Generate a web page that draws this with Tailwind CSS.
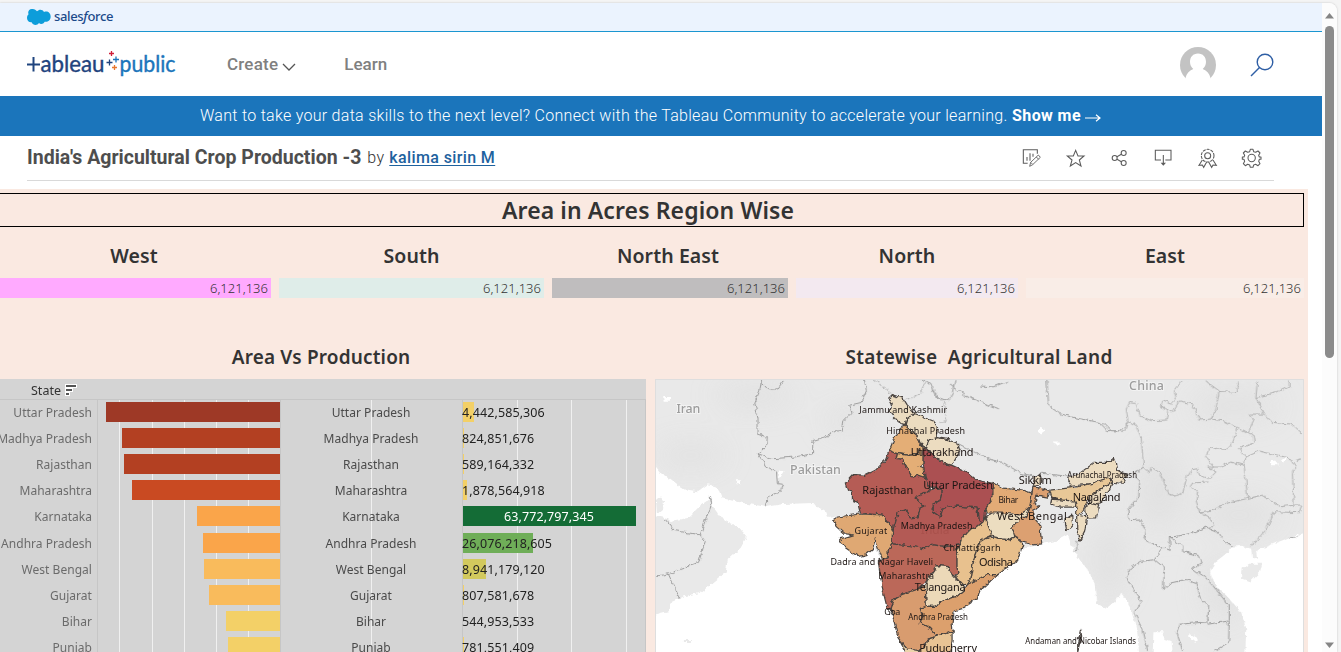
<!DOCTYPE html>
<html lang="en">
<head>
<meta charset="utf-8">
<title>India's Agricultural Crop Production -3 | Tableau Public</title>
<script src="https://cdn.jsdelivr.net/npm/@tailwindcss/browser@4"></script>
</head>
<body class="flex h-[652px] w-[1341px] overflow-hidden bg-[#f4f4f4] pt-[3px] font-['Roboto',sans-serif]">
<div class="flex h-[649px] w-[1337px] overflow-hidden rounded-tr-lg bg-[#fcfcfc] shadow-[0_0_2px_#bbb]">
<div class="h-full w-[1322px] shrink-0 overflow-hidden bg-white">

  <!-- Salesforce strip -->
  <div class="flex h-[29px] items-center border-b border-[#1b96d0] bg-[#ebf3fe] pl-[27px]">
    <svg class="h-4 w-6 shrink-0" viewBox="81 26 72 48"><path fill="#0d9dda" d="M111 33c7-8 17-6 21 2 11-4 20 3 20 14 0 10-9 17-18 15-4 8-13 8-17 4-5 8-18 8-22-2-9 1-14-6-14-13 0-5 2-9 5-11-5-10 4-17 12-16 6 0 10 3 13 7z"/></svg>
    <span class="ml-[3px] font-['Noto_Sans',sans-serif] text-[13px] font-medium tracking-[-0.34px] text-[#1b4a8a]">sales<i>f</i>orce</span>
  </div>

  <!-- Main navigation -->
  <div class="flex h-16 items-center pl-[26px] pr-[48px] pt-px">
    <svg class="h-8 w-[152px]" viewBox="26 48 152 32" font-family="Lato, sans-serif">
      <path d="M27 63.500h13M33.500 56v14.500" stroke="#1f447e" stroke-width="2" fill="none"/>
      <text x="40.500" y="71" font-size="22.500" textLength="64" lengthAdjust="spacingAndGlyphs" fill="#1f447e" stroke="#1f447e" stroke-width=".4">ableau</text>
      <text x="119.500" y="71" font-size="22.500" textLength="56" lengthAdjust="spacingAndGlyphs" fill="#1b75bb" stroke="#1b75bb" stroke-width=".4">public</text>
      <g fill="none" stroke-width="1.300"><path stroke="#d0203a" d="M109 52.500h5M111.500 50v5"/><path stroke="#1f447e" d="M106.500 61.500h6M109.500 58.500v6"/><path stroke="#1b75bb" d="M113 58.500h6M116 55.500v6"/><path stroke="#e8762c" d="M112 66.500h5M114.500 64v5"/></g>
    </svg>
    <span class="ml-[49px] text-[17px] font-medium tracking-[0.2px] text-[#808080]">Create</span>
    <svg class="ml-[4px] mt-1 h-2 w-[14px]" viewBox="0 0 14 8" fill="none" stroke="#555" stroke-width="1.300"><path d="M1 1l6 6 6-6"/></svg>
    <span class="ml-[48px] text-[17px] font-medium tracking-[0.05px] text-[#808080]">Learn</span>
    <svg class="ml-auto h-9 w-9" viewBox="0 0 36 36"><defs><clipPath id="av"><path d="M0 0h36v32H0z"/></clipPath></defs><circle cx="18" cy="18" r="18" fill="#c3c3c3" clip-path="url(#av)"/><path fill="#fff" d="M18 6.500c-5 0-8 3.500-8 8.500 0 3 1.300 5.300 3.300 7C9 23.500 6.500 27 5.500 31v5h25v-5c-1-4-3.500-7.500-7.800-9 2-1.700 3.300-4 3.300-7 0-5-3-8.500-8-8.500z"/></svg>
    <svg class="ml-[34px] h-6 w-6" viewBox="0 0 24 24" fill="none" stroke="#2f5fa5" stroke-width="1.400"><circle cx="15" cy="9" r="7.800"/><path d="M9.500 14.500L1 23"/></svg>
  </div>

  <!-- Announcement -->
  <div class="flex h-10 items-center whitespace-pre bg-[#1b75bb] pl-[200px] text-base text-white"><span class="w-[807px] font-light tracking-[0.285px]">Want to take your data skills to the next level? Connect with the Tableau Community to accelerate your learning.</span><span class="ml-[5px] font-bold tracking-[0.41px]">Show me</span><svg class="ml-[4px] mt-1 h-2 w-4" viewBox="0 0 16 8" fill="none" stroke="#fff" stroke-width="1.200"><path d="M0 4h15M11 .8L15 4l-4 3.200"/></svg></div>

  <!-- Title row -->
  <div class="ml-[27px] flex h-[45px] w-[1247px] items-center border-b border-[#d9d9d9] pb-px">
    <h1 class="text-[19.500px] font-bold tracking-[0.01px] text-[#4e4e4e]">India's Agricultural Crop Production -3</h1>
    <span class="ml-1.5 text-base font-light tracking-[0.27px] text-[#333]">by</span>
    <a class="ml-[5px] text-base font-medium tracking-[0.38px] text-[#1e629e] underline underline-offset-2">kalima sirin M</a>
    <svg class="ml-auto mr-[9px] h-6 w-[244px]" viewBox="124 438 732 72" fill="none" stroke="#5c5c5c" stroke-width="3.200">
      <path d="M144 490h-13v-41h42v12M142 482v-11M151 482v-22M160 470v-9"/><path d="M150 499l3-12 23-22 6 7-23 22zM170 471l7 7M153 487l6 6" stroke-width="2.600"/>
      <path stroke-linejoin="miter" d="M288 451l7 17h18l-14 12 5 18-16-10-16 10 5-18-14-12h18z"/>
      <circle cx="405" cy="474" r="7.500"/><circle cx="432" cy="459" r="7.500"/><circle cx="432" cy="489" r="7.500"/><path d="M412 470l13-7M412 478l13 7"/>
      <path d="M544 480h-17v-29h47v29h-17M551 465v26"/><path fill="#5c5c5c" stroke="none" d="M543 488h16l-8 9z"/>
      <circle cx="684" cy="467" r="9"/><circle cx="684" cy="467" r="19" stroke-dasharray="9 3"/><path d="M668 480l-10 16 10-1 4 7 9-16M700 480l10 16-10-1-4 7-9-16"/>
      <circle cx="816" cy="474" r="11"/><path stroke-linejoin="round" d="M812 448h8l2 7 6 2 7-4 6 6-4 7 2 5h5v7h-5l-2 6 4 7-6 6-7-4-6 2-2 7h-8l-2-7-6-2-7 4-6-6 4-7-2-6h-5v-7h5l2-5-4-7 6-6 7 4 6-2z"/>
    </svg>
  </div>

  <!-- Dashboard -->
  <div class="mt-2 h-[463px] w-[1308px] overflow-hidden bg-[#fae9e1] pt-1 font-['Noto_Sans',sans-serif] text-[#333]">
    <h2 class="-ml-px flex h-[34px] w-[1305px] items-center justify-center border border-black pr-[7px] text-[23px] font-semibold tracking-[0.1px]">Area in Acres Region Wise</h2>
    <div class="flex h-[71px] gap-2 pt-[15px] text-[19.500px] font-semibold leading-7 tracking-[0.1px] [&_p]:mt-2 [&_p]:flex [&_p]:h-5 [&_p]:items-center [&_p]:justify-end [&_p]:pr-[3px] [&_p]:text-[13px] [&_p]:font-light [&_p]:tracking-[0.02px]">
      <div class="w-[271px] text-center"><span class="-ml-[3px]">West</span><p class="bg-[#ffaaff]">6,121,136</p></div>
      <div class="w-[265px] text-center">South<p class="bg-[#dfede9]">6,121,136</p></div>
      <div class="w-[236px] text-center"><span class="-ml-[4px]">North East</span><p class="bg-[#bfbdbe]">6,121,136</p></div>
      <div class="w-[222px] text-center">North<p class="bg-[#f3e9f0]">6,121,136</p></div>
      <div class="w-[278px] text-center">East<p class="bg-[#f9ede7]">6,121,136</p></div>
    </div>
    <div class="mt-[45px] flex h-[36px] whitespace-pre text-[19px] font-semibold leading-7"><span class="w-[642px] pl-1 text-center tracking-[0.16px]">Area Vs Production</span><span class="w-[674px] pl-3 text-center tracking-[0.28px]">Statewise  Agricultural Land</span></div>

    <div class="flex gap-[9px]">
      <!-- Area and production table -->
      <div class="relative h-[273px] w-[646px] overflow-hidden bg-[#d4d4d4] text-[12px]">
        <svg class="absolute left-0 top-0 h-[273px] w-[646px]" viewBox="0 379 646 273" fill="none"><path stroke="#f0f0f0" d="M119.500 400v252M152.500 400v252M184.500 400v252M216.500 400v252M248.500 400v252M371.500 400v252M517.500 400v252M571.500 400v252M626.500 400v252"/><path stroke="#c6c6c6" d="M0 399.500h646M97.500 400v252M280.500 400v252M462.500 400v252M645.500 400v252"/></svg>
        <div class="relative flex h-5 items-center gap-1 pl-[31px] pt-[5px] text-[12.500px]">State<svg class="-mt-1 h-3 w-3" viewBox="0 0 12 12"><path stroke="#fff" stroke-width="4" d="M0 2h12M0 6h8M0 10h5"/><path stroke="#555" stroke-width="2" d="M1 2h10M1 6h6M1 10h3"/></svg></div>
        <div id="rows" class="relative"></div>
      </div>

      <!-- Map -->
      <svg class="h-[274px] w-[649px] border border-[#dedede] bg-white" viewBox="655 379 649 274" preserveAspectRatio="none">
        <defs>
          <filter id="rough" filterUnits="userSpaceOnUse" x="655" y="370" width="650" height="290" color-interpolation-filters="sRGB"><feTurbulence type="fractalNoise" baseFrequency="0.2" numOctaves="2" seed="4" result="n"/><feDisplacementMap in="SourceGraphic" in2="n" scale="5" xChannelSelector="R" yChannelSelector="G"/></filter>
          <filter id="soft"><feGaussianBlur stdDeviation="14"/></filter>
          <clipPath id="landclip"><path d="M655 378H1304V533L1293 537 1277 543 1257 551 1258 559 1253 558 1252 549 1242 546 1233 547 1228 553 1215 563 1211 573 1217 587 1228 597 1242 613 1247 630 1246 652H1174L1172 642 1165 640 1163 633 1154 633 1153 652H1140L1138 635 1133 615 1128 602 1123 594 1117 600 1107 609 1097 605 1095 584 1090 574 1080 560 1073 549 1068 535 1057 541 1043 544 1020 556 990 580 960 600 950 640 910 640 890 600 878 550 860 520 845 515 827 518 824 510 817 508 813 503 783 504 765 507 737 502 722 498 718 487 707 484 697 491 683 489 670 479 660 473 655 462z"/></clipPath>
        </defs>
        <g filter="url(#rough)" fill="#e9e9e9">
          <path d="M650 370H1310V531L1293 537 1277 543 1257 551 1258 559 1253 558 1252 549 1242 546 1233 547 1228 553 1215 563 1211 573 1217 587 1228 597 1242 613 1247 630 1246 660H1174L1172 642 1165 640 1163 633 1154 633 1153 660H1140L1138 635 1133 615 1128 602 1123 594 1117 600 1107 609 1097 605 1095 584 1090 574 1080 560 1073 549 1068 535 1057 541 1043 544 1020 550 990 575 960 595 950 620 910 630 890 600 880 560 860 520 845 515 827 518 824 510 817 508 813 503 783 504 765 507 737 502 722 498 718 487 707 484 697 491 683 489 670 479 660 473 650 460z"/>
          <path d="M650 515L663 518 670 521 687 518 700 505 710 498 713 508 722 520 738 527 746 537 740 548 727 560 725 573 710 585 700 593 683 597 670 603 667 612 650 616zM655 500l4-4 4 5-1 9-6 5z"/>
          <path d="M1242 570l8-6 13 0-2 8-10 10-9-3zM682 641h9v3h-9z"/>
        </g>
        <g clip-path="url(#landclip)"><g filter="url(#soft)" fill="#dfdfdf" opacity=".8"><ellipse cx="690" cy="455" rx="35" ry="12"/><ellipse cx="755" cy="395" rx="40" ry="12"/><ellipse cx="850" cy="420" rx="25" ry="12"/><ellipse cx="1235" cy="405" rx="45" ry="14"/><ellipse cx="1160" cy="490" rx="22" ry="40"/><ellipse cx="1240" cy="515" rx="40" ry="16"/><ellipse cx="1110" cy="560" rx="16" ry="40"/><ellipse cx="1225" cy="590" rx="20" ry="30"/></g></g>
        <g fill="#fff" filter="url(#rough)"><path d="M662 396h7v5h-6zM778 470l5 2-3 5-3-2zM735 480h5v4h-4zM1037 430l4-4 5 4-5 4zM1053 441h8v3h-6zM1271 461l5-1 4 5-7 0zM1282 460l5-4-2 8zM1190 634l8 5-2 4-6-5z"/></g>

        <!-- Country and province borders -->
        <g filter="url(#rough)" fill="none" stroke="#9b9b9b">
          <g transform="translate(650 375) scale(.33333)" stroke-width="3">
            <path d="M333 10L327 45 312 80 322 130 322 175 350 185 348 210 322 235 345 272 378 290 380 325 396 327 390 348 350 365 343 397M322 235L365 250 430 245 486 235 487 195 520 185 555 165 575 168 580 135 605 110 598 88 632 80 648 45 642 10M333 20L350 38 380 40 400 12M40 430L70 467 148 480 163 500 143 563 52 598 18 604M52 598L87 673M148 480L165 430 178 400 182 385 178 362"/>
          </g>
          <g stroke-dasharray="2.500 1.500" stroke-width=".9"><path d="M873 378L890 392 893 402M903 400L920 393 925 380M932 390L945 402 946 420 938 422"/></g>
          <path d="M921 379L932 384 935 395 948 400 952 393 955 379M950 384L965 395 978 400 999 408M981 385L993 386 1008 380M958 443L975 452 990 459 1003 462 1021 473 1035 476 1042 473 1068 476M1047 379L1049 405 1060 413 1080 418 1100 422 1108 430 1120 430 1128 423"/>
          <g transform="translate(1100 340) scale(.33333)" stroke-width="3">
            <path stroke="#b0b0b0" d="M0 248L15 250 35 270 75 272 85 240 80 205 90 185 110 188 122 225 155 240 200 238 205 215 185 195 190 180 215 190 230 175 225 150 245 122M185 195L218 215 240 180 280 190 300 238 335 235 350 205 360 150 322 122M360 155L410 152 420 120M335 235L370 240 425 265 465 285 468 305 420 325 440 350 435 375 395 365 360 380 345 380 322 350 330 325 350 320 380 328 400 305 415 265M475 120L470 170 495 220 520 245 575 250 608 280M470 170L530 155 570 135 570 120M495 220L450 220 465 238 450 270M85 240L110 255 125 290 132 380 150 400 155 380 185 400 205 460 225 468 250 460 260 415 278 388 295 385 300 405 330 415 350 395 322 380 345 380M440 350L480 332 540 345 575 355 590 380 580 400 585 495 545 500 490 465 445 475 440 420 435 375M445 475L380 490 345 510 300 515 290 480 295 455 272 440 280 428 330 425M300 515L345 545 340 560 322 562M585 495L608 495 600 518 525 515 500 570 455 620M590 360L608 355"/>
            <path d="M132 380L105 400 120 430 118 470 85 510 88 542 125 540 140 575 135 600 165 615 190 622 212 632 210 590 230 590 275 580 322 562 355 575 375 605 405 620M190 622L165 660 125 665 95 685 80 715 105 755 125 790 105 820 130 870 145 936M165 660L195 685 192 750 215 730 260 720 290 732 305 780 328 800 325 848 240 855 232 880 250 936M210 590L250 620 250 635 300 648 308 670 278 685 320 715 350 750 390 800 390 845 325 855M390 845L388 910 345 936M570 595L600 588"/>
          </g>
          <path d="M1077 541V551l-3 0"/>
        </g>

        <!-- State shapes, shaded by agricultural land -->
        <g filter="url(#rough)" stroke="#4a4440" stroke-width="1.200" stroke-linejoin="round">
          <path fill="#ecdcc0" d="M888.500 397L892 394 902 397 907 405 915 413 907 417 905 424 898 421 889 410 892 404z"/>
          <path fill="#ecdcc0" d="M907 417L915 413 923 416 930 419 935 421 938 430 937 437 929 439 926 448 920 443 917 435 907 427 905 424z"/>
          <path fill="#e4ae76" d="M900 428L905 424 907 427 917 435 920 443 918 454 908 455 897 453 889 450 893 440z"/>
          <path fill="#ecdcc0" d="M929 439L937 437 948 439 958 443 960 450 952 465 943 463 930 452 926 448z"/>
          <path fill="#e4ae76" d="M897 453L908 455 918 454 920 443 923 447 923 463 919 467 925 469 924 477 917 475 912 477 906 467 902 459 896 458z"/>
          <path fill="#ab5052" d="M923 447L930 452 943 463 952 465 967 472 977 480 993 483 992 492 993 498 986 507 984 525 979 520 978 508 957 506 943 508 940 517 933 512 933 504 940 500 942 490 935 487 928 487 925 477 923 463z"/>
          <path fill="#b55c55" d="M889 450L885 460 875 470 865 475 853 474 845 483 847 490 852 492 852 500 857 502 860 513 882 515 890 525 893 529 897 522 898 512 905 510 910 518 918 517 920 508 924 506 915 498 930 490 928 487 925 477 917 475 912 477 906 467 902 459 896 458 897 453z"/>
          <path fill="#b35a55" d="M893 529L898 512 905 510 910 518 918 517 920 508 924 506 915 498 930 490 935 487 942 490 940 500 933 504 933 512 940 517 943 508 957 506 978 508 979 520 983 522 977 527 967 532 963 537 960 545 947 547 933 545 923 549 910 546 900 545 892 544 892 535z"/>
          <path fill="#dfa873" d="M832 520L837 517 860 514 882 515 893 529 892 535 892 544 888 550 888 557 882 559 878 549 875 539 872 550 866 555 858 557 845 548 839 539 843 538 853 535 845 534 837 527z"/>
          <path fill="#bb6859" d="M892 544L900 545 910 546 923 549 933 545 947 547 960 545 957 550 957 567 958 574 953 577 948 567 937 566 933 572 927 580 917 590 902 595 893 600 890 609 887 609 882 589 878 562 888 557 888 550z"/>
          <path fill="#e8c18e" d="M960 545L963 537 967 532 977 527 983 522 985 518 993 515 995 525 990 537 980 542 975 555 972 569 970 580 967 585 962 585 955 577 958 574 957 567 957 550z"/>
          <path fill="#ecd9b8" d="M948 567L937 566 933 572 927 580 925 590 926 607 935 607 947 600 957 597 965 590 962 585 953 577z"/>
          <path fill="#dca06d" d="M926 607L935 607 947 600 957 597 965 590 967 585 987 575 997 572 997 575 988 584 980 591 977 599 963 609 953 612 952 624 953 632 937 637 930 629 920 624 922 615 920 609z"/>
          <path fill="#d89c6f" d="M890 609L893 600 902 595 917 590 925 586 926 607 920 609 922 615 920 624 930 629 937 637 928 640 920 652 907 650 898 639 893 619z"/>
          <path fill="#e8c494" d="M937 637L953 632 953 642 950 656H920L920 652 928 640z"/>
          <path fill="#ecd3ab" d="M899 641L907 650 920 652 915 658H908z"/>
          <path fill="#e8bf8b" d="M980 542L985 539 993 537 1003 539 1010 540 1015 537 1023 544 1020 554 1017 562 1005 569 997 575 987 575 967 585 970 580 972 569 975 555z"/>
          <path fill="#ecddc0" d="M985 518L993 512 1003 513 1023 510 1030 508 1027 516 1020 519 1012 527 1017 535 1010 540 1003 539 993 537 990 530z"/>
          <path fill="#e2ab76" d="M993 482L1003 488 1023 490 1032 493 1030 507 1020 515 1003 513 987 513 986 507 993 497z"/>
          <path fill="#dca071" d="M1033 487L1042 488 1050 492 1048 497 1037 495 1035 503 1040 507 1033 510 1035 519 1040 525 1042 544 1033 545 1023 542 1015 537 1012 527 1020 519 1027 516 1030 508 1032 495z"/>
          <path fill="#ecdcc0" d="M1033 477L1040 474 1042 480 1040 485 1034 486z"/>
          <path fill="#ecdcc0" d="M1068 480L1070 477 1080 473 1095 462 1110 462 1115 458 1117 463 1118 470 1127 475 1123 483 1113 482 1110 477 1093 483 1072 486z"/>
          <path fill="#e8c797" d="M1050 490L1077 487 1093 483 1110 477 1112 482 1103 487 1090 497 1083 512 1077 515 1077 503 1052 498z"/>
          <path fill="#ecdcc0" d="M1052 499L1075 501 1077 507 1060 507 1051 504zM1103 487L1113 482 1110 490 1102 500 1098 505 1090 503 1090 497zM1090 503L1099 505 1097 518 1087 518 1086 508zM1077 515L1087 517 1085 532 1080 542 1077 529zM1065 520L1072 515 1073 525 1067 531z"/>
          <path fill="#777" d="M1081 631l1 5-2 8-2 8 0-8z"/>
          <path fill="none" d="M960 545l-4 5 2 6M889 609l3 4"/>
        </g>

        <!-- Labels -->
        <g font-family="'Noto Sans', sans-serif" text-anchor="middle">
          <g font-size="12.500" font-weight="500" fill="#9c9c9c" stroke="#f3f3f3" stroke-width="2" paint-order="stroke"><text x="687.500" y="412" textLength="24">Iran</text><text x="815" y="473.500" textLength="51">Pakistan</text><text x="1147" y="389.500" textLength="35">China</text></g>
          <text x="935" y="534" font-size="12" fill="#a9514c">India</text>
          <g fill="#1d1614">
            <g font-size="11"><text x="887.500" y="494" textLength="51">Rajasthan</text><text x="942" y="456" textLength="63">Uttarakhand</text><text x="958" y="489" textLength="70">Uttar Pradesh</text><text x="1035.500" y="484" textLength="33">Sikkim</text><text x="1097" y="501" textLength="48">Nagaland</text><text x="1032" y="520" textLength="70">West Bengal</text><text x="940" y="592" textLength="51">Telangana</text><text x="996" y="566" textLength="34">Odisha</text><text x="948" y="653" textLength="58">Puducherry</text></g>
            <g font-size="9"><text x="903" y="412.500" textLength="88">Jammu and Kashmir</text><text x="925.500" y="433.500" textLength="79">Himachal Pradesh</text><text x="936.500" y="529" textLength="72">Madhya Pradesh</text><text x="870.500" y="534" textLength="33">Gujarat</text><text x="881.500" y="565" textLength="103">Dadra and Nagar Haveli</text><text x="906" y="579" textLength="56">Maharashtra</text><text x="972" y="551" textLength="57">Chhattisgarh</text><text x="892" y="616" textLength="16">Goa</text></g>
            <g font-size="8.500"><text x="938" y="620.500" textLength="60" lengthAdjust="spacingAndGlyphs">Andhra Pradesh</text><text x="1008.500" y="503" textLength="20">Bihar</text><text x="1102.500" y="477.500" textLength="70" lengthAdjust="spacingAndGlyphs">Arunachal Pradesh</text><text x="1081" y="644.500" textLength="111" lengthAdjust="spacingAndGlyphs">Andaman and Nicobar Islands</text></g>
          </g>
        </g>
      </svg>
    </div>
  </div>
</div>

<!-- Scrollbar -->
<div class="flex h-full w-[15px] flex-col items-center bg-[#fcfcfc] pt-[10px]">
  <svg class="h-[6px] w-[9px]" viewBox="0 0 9 6"><path fill="#858585" d="M4.500 0L9 5.500H0z"/></svg>
  <div class="mt-[7px] h-[332px] w-[9px] rounded-full bg-[#8b8b8b]"></div>
  <svg class="mb-[4px] mt-auto h-[6px] w-[9px]" viewBox="0 0 9 6"><path fill="#858585" d="M4.500 6L9 .5H0z"/></svg>
</div>
</div>

<script>
  // [state, area bar width, area colour, production, production bar width, production colour]
  const data = [
    ["Uttar Pradesh",174,"#9e3926","4,442,585,306",11,"#f3d067"],
    ["Madhya Pradesh",158,"#b34022","824,851,676",1,"#f3d067"],
    ["Rajasthan",156,"#b34022","589,164,332",1,"#f3d067"],
    ["Maharashtra",148,"#c94a22","1,878,564,918",4,"#f3d067"],
    ["Karnataka",83,"#faa54a","63,772,797,345",173,"#146c36"],
    ["Andhra Pradesh",77,"#faa54a","26,076,218,605",70,"#6fae58"],
    ["West Bengal",76,"#f9bb5c","8,941,179,120",23,"#d2c95d"],
    ["Gujarat",71,"#f9bb5c","807,581,678",1,"#f3d067"],
    ["Bihar",54,"#f3d067","544,953,533",0,"#f3d067"],
    ["Punjab",52,"#f3d067","781,551,409",1,"#f3d067"]
  ];
  document.getElementById("rows").innerHTML = data.map((d, i) => `
    <div class="grid ${i === 4 ? "h-[27px]" : "h-[26px]"} grid-cols-[98px_182px_182px_1fr] pt-[3px] leading-[22px]">
      <span class="flex justify-end whitespace-nowrap pr-[6px] tracking-[0.03px] text-[#6b6b6b]">${d[0]}</span>
      <span class="flex justify-end"><span class="h-5" style="width:${d[1]}px;background:${d[2]}"></span></span>
      <span class="text-center tracking-[0.03px] text-[#4a4a4a]">${d[0]}</span>
      <span class="relative pl-px"><span class="block h-5" style="width:${d[4]}px;background:${d[5]}"></span><span class="absolute left-0 top-0 text-[12.500px] tracking-[0.1px] ${i === 4 ? "w-[174px] text-center text-white" : "text-[#222]"}">${d[3]}</span></span>
    </div>`).join("");
</script>
</body>
</html>
